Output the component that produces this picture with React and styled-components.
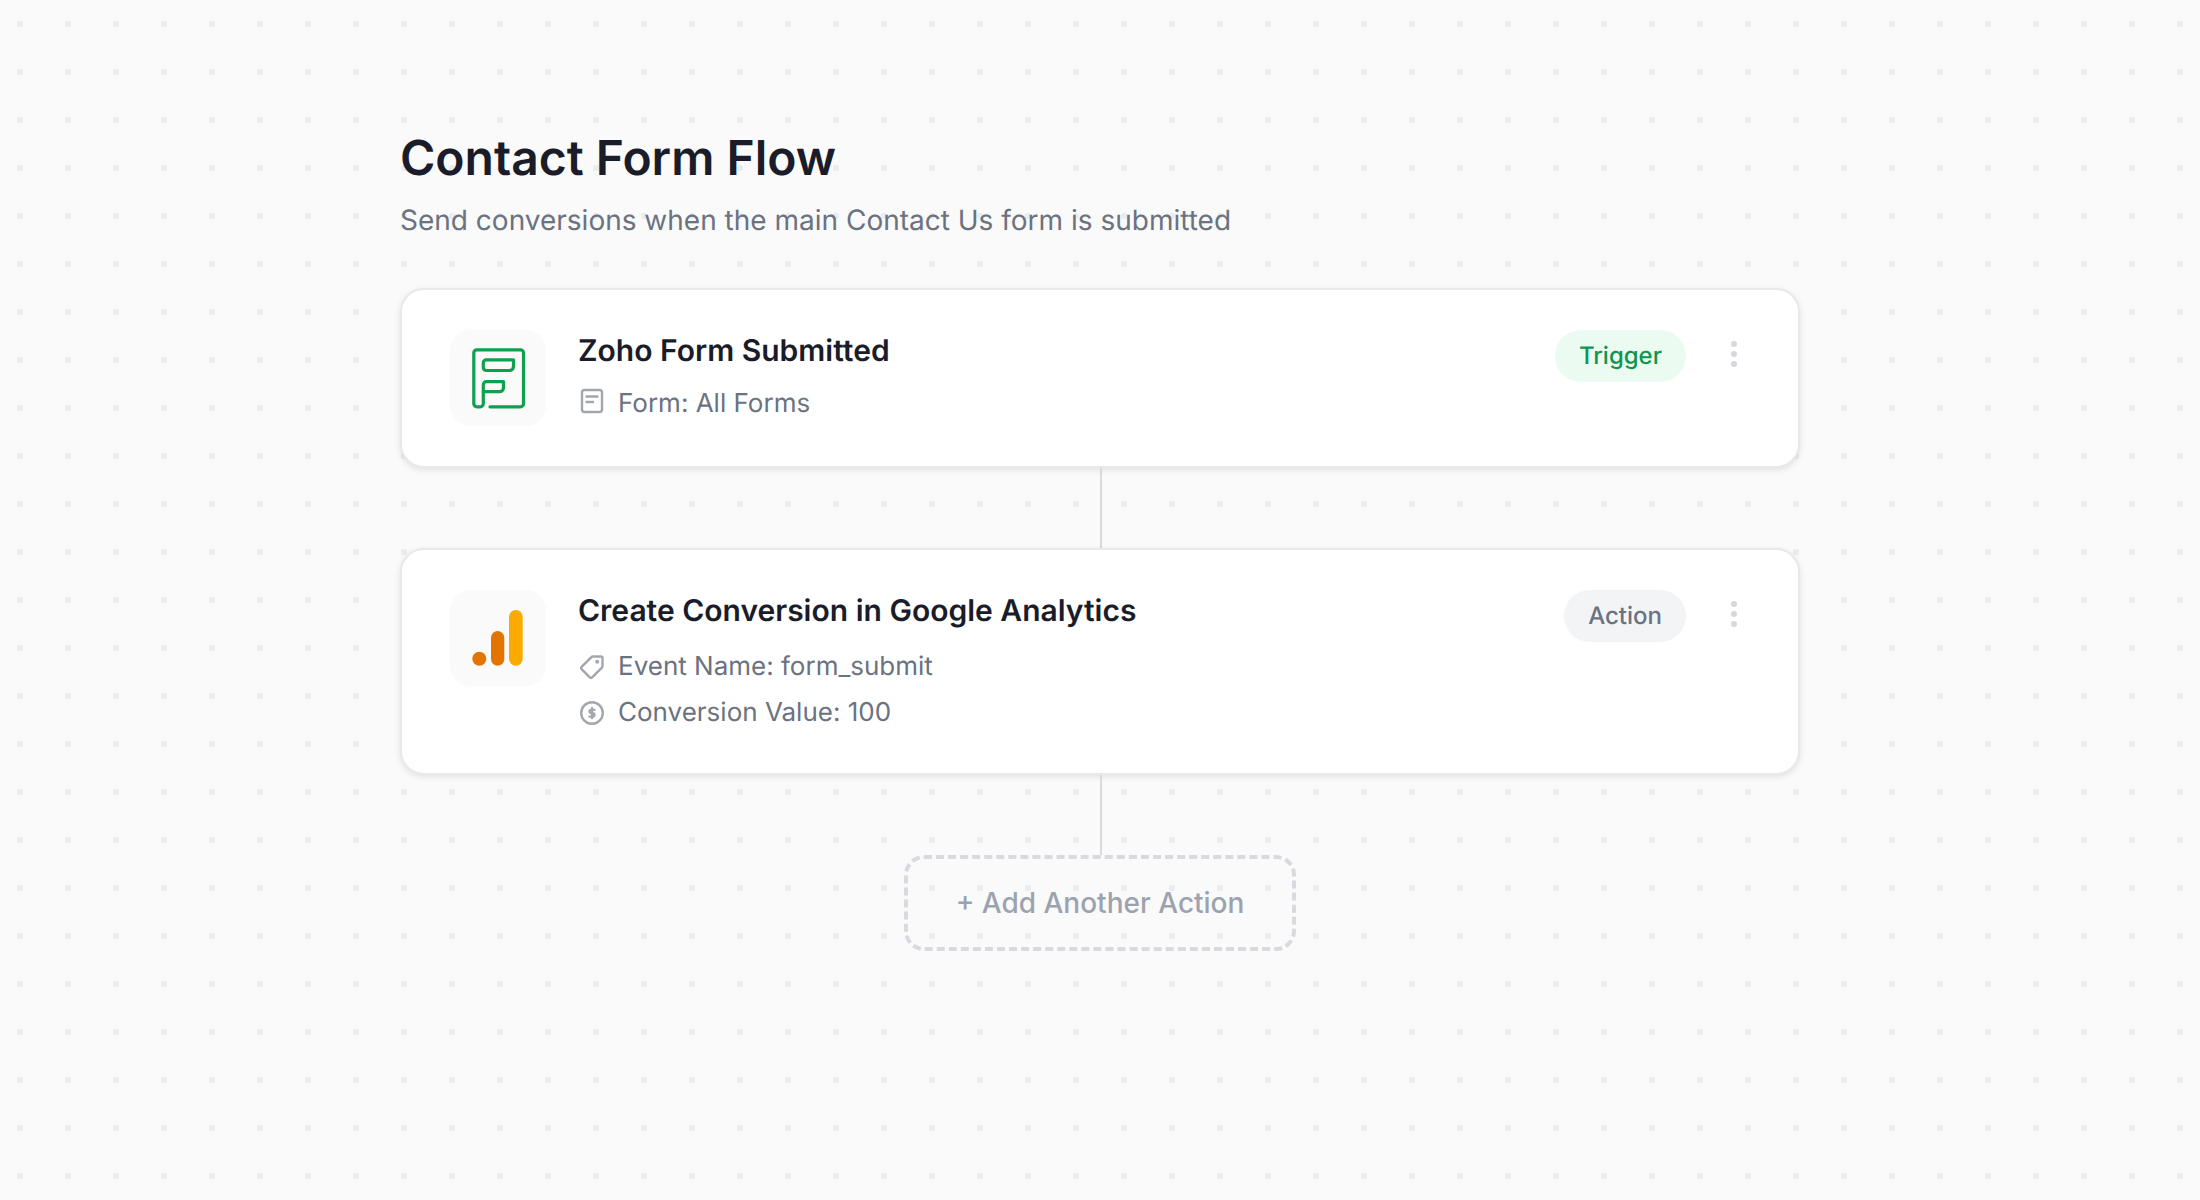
import React from "react";
import styled, { createGlobalStyle } from "styled-components";

const Global = createGlobalStyle`
  html, body { margin: 0; padding: 0; }
  body {
    font-family: Inter, "Liberation Sans", sans-serif;
    background: #fafafa;
    text-rendering: geometricPrecision;
  }
`;

const Page = styled.div`
  min-height: 1200px;
  box-sizing: border-box;
  padding: 128px 400px 0;
  background-color: #fafafa;
  background-image: radial-gradient(circle at center, #ebecef 3px, transparent 3.6px);
  background-size: 48px 48px;
  background-position: -4px 0;
`;

const Title = styled.h1`
  margin: 0;
  font-size: 48px;
  line-height: 60px;
  font-weight: 600;
  color: #1a1d29;
`;

const Subtitle = styled.p`
  margin: 11px 0 47px;
  font-size: 28px;
  line-height: 42px;
  color: #6b7280;
`;

const Card = styled.section`
  box-sizing: border-box;
  display: flex;
  align-items: flex-start;
  gap: 32px;
  padding: 40px 48px;
  background: #fff;
  border: 2px solid #e8e9eb;
  border-radius: 24px;
  box-shadow: 0 2px 6px rgba(0, 0, 0, 0.1);
`;

const Tile = styled.div`
  flex: none;
  width: 96px;
  height: 96px;
  border-radius: 20px;
  background: #fafafa;
`;

const Body = styled.div`
  flex: 1;
  min-width: 0;
`;

const CardTitle = styled.h2`
  margin: -1px 0 1px;
  font-size: 30px;
  line-height: 44px;
  font-weight: 600;
  color: #1a1d29;
`;

const MetaList = styled.div`
  display: flex;
  flex-direction: column;
  gap: 6px;
  margin-top: ${(p) => p.$offset}px;
`;

const MetaRow = styled.div`
  display: flex;
  align-items: center;
  gap: 12px;
  font-size: 26px;
  line-height: 40px;
  color: #6b7280;

  svg {
    margin-top: ${(p) => p.$iconLift * -2}px;
  }
`;

const Badge = styled.span`
  flex: none;
  box-sizing: border-box;
  height: 52px;
  padding: 0 24px 2px;
  display: flex;
  align-items: center;
  border-radius: 26px;
  font-size: 24px;
  font-weight: 500;
  color: ${(p) => (p.$kind === "trigger" ? "#0e9650" : "#6b7280")};
  background: ${(p) => (p.$kind === "trigger" ? "#ebfbf2" : "#f3f4f6")};
`;

const MenuButton = styled.button`
  flex: none;
  width: 32px;
  height: 48px;
  padding: 0;
  border: 0;
  background: none;
  display: flex;
  align-items: center;
  justify-content: center;
`;

const Connector = styled.div`
  width: 2px;
  height: 80px;
  margin-left: 50%;
  background: #d9dadf;
`;

const AddButton = styled.button`
  display: block;
  box-sizing: border-box;
  width: 392px;
  height: 96px;
  margin: 0 auto;
  padding: 0;
  background: transparent;
  border: 4px dashed #d9dadf;
  border-radius: 20px;
  font-family: inherit;
  font-size: 28px;
  font-weight: 500;
  color: #9ca3af;
`;

const Svg = styled.svg`
  display: block;
  flex: none;
`;

const ZohoIcon = () => (
  <Svg width="96" height="96" viewBox="0 0 96 96" fill="none" stroke="#0e9f4f" strokeWidth="3.2" strokeLinecap="round" strokeLinejoin="round">
    <path d="M40 76.8H70.5a3 3 0 0 0 3-3V22.8a3 3 0 0 0-3-3H26.8a3 3 0 0 0-3 3V73.8a3 3 0 0 0 3 3H30.3a3 3 0 0 0 3-3V54.7a3 3 0 0 1 3-3H53.5V57.7a4 4 0 0 1-4 4H33.5" />
    <path d="M36.3 29.8H63.5V36.5a4 4 0 0 1-4 4H36.3a3 3 0 0 1-3-3V32.8a3 3 0 0 1 3-3Z" />
  </Svg>
);

const AnalyticsIcon = () => (
  <Svg width="96" height="96" viewBox="0 0 96 96">
    <rect x="59" y="20" width="13.7" height="55.7" rx="6.85" fill="#f9ab00" />
    <rect x="41" y="41" width="13.3" height="34.7" rx="6.65" fill="#e37400" />
    <circle cx="29.3" cy="68.7" r="7" fill="#e37400" />
  </Svg>
);

const metaProps = {
  width: 28,
  height: 28,
  viewBox: "0 0 28 28",
  fill: "none",
  stroke: "#a3a6ae",
  strokeWidth: 2.4,
  strokeLinecap: "round",
  strokeLinejoin: "round",
};

const FormIcon = () => (
  <Svg {...metaProps}>
    <rect x="4" y="3" width="20" height="22" rx="2.5" />
    <path d="M8.5 9.5h11M8.5 15h6.5" />
  </Svg>
);

const TagIcon = () => (
  <Svg {...metaProps}>
    <path d="M23 3.5h-8.2a2 2 0 0 0-1.4.6L3.8 13.6a2 2 0 0 0 0 2.8l7.8 7.8a2 2 0 0 0 2.8 0l9.5-9.6a2 2 0 0 0 .6-1.4V5a1.5 1.5 0 0 0-1.5-1.5Z" />
    <circle cx="19.2" cy="8.8" r="0.8" fill="#a3a6ae" />
  </Svg>
);

const DollarIcon = () => (
  <Svg {...metaProps}>
    <circle cx="14" cy="14" r="10.8" />
    <path d="M16.6 10.8h-3.4a1.7 1.7 0 0 0 0 3.4h1.6a1.7 1.7 0 0 1 0 3.4h-3.4M14 8.8v10.4" strokeWidth="2.2" />
  </Svg>
);

const DotsIcon = () => (
  <Svg width="8" height="28" viewBox="0 0 8 28" fill="#d6d7dd">
    <circle cx="4" cy="4" r="3" />
    <circle cx="4" cy="14" r="3" />
    <circle cx="4" cy="24" r="3" />
  </Svg>
);

const StepCard = ({ icon, title, offset, iconLift = 0, meta, kind, label }) => (
  <Card>
    <Tile>{icon}</Tile>
    <Body>
      <CardTitle>{title}</CardTitle>
      <MetaList $offset={offset}>
        {meta.map(([Icon, text]) => (
          <MetaRow key={text} $iconLift={iconLift}>
            <Icon />
            {text}
          </MetaRow>
        ))}
      </MetaList>
    </Body>
    <Badge $kind={kind}>{label}</Badge>
    <MenuButton aria-label="More">
      <DotsIcon />
    </MenuButton>
  </Card>
);

export default function App() {
  return (
    <Page>
      <Global />
      <Title>Contact Form Flow</Title>
      <Subtitle>Send conversions when the main Contact Us form is submitted</Subtitle>
      <StepCard
        icon={<ZohoIcon />}
        title="Zoho Form Submitted"
        offset={11}
        iconLift={3}
        meta={[[FormIcon, "Form: All Forms"]]}
        kind="trigger"
        label="Trigger"
      />
      <Connector />
      <StepCard
        icon={<AnalyticsIcon />}
        title="Create Conversion in Google Analytics"
        offset={14}
        meta={[
          [TagIcon, "Event Name: form_submit"],
          [DollarIcon, "Conversion Value: 100"],
        ]}
        kind="action"
        label="Action"
      />
      <Connector />
      <AddButton>+ Add Another Action</AddButton>
    </Page>
  );
}
